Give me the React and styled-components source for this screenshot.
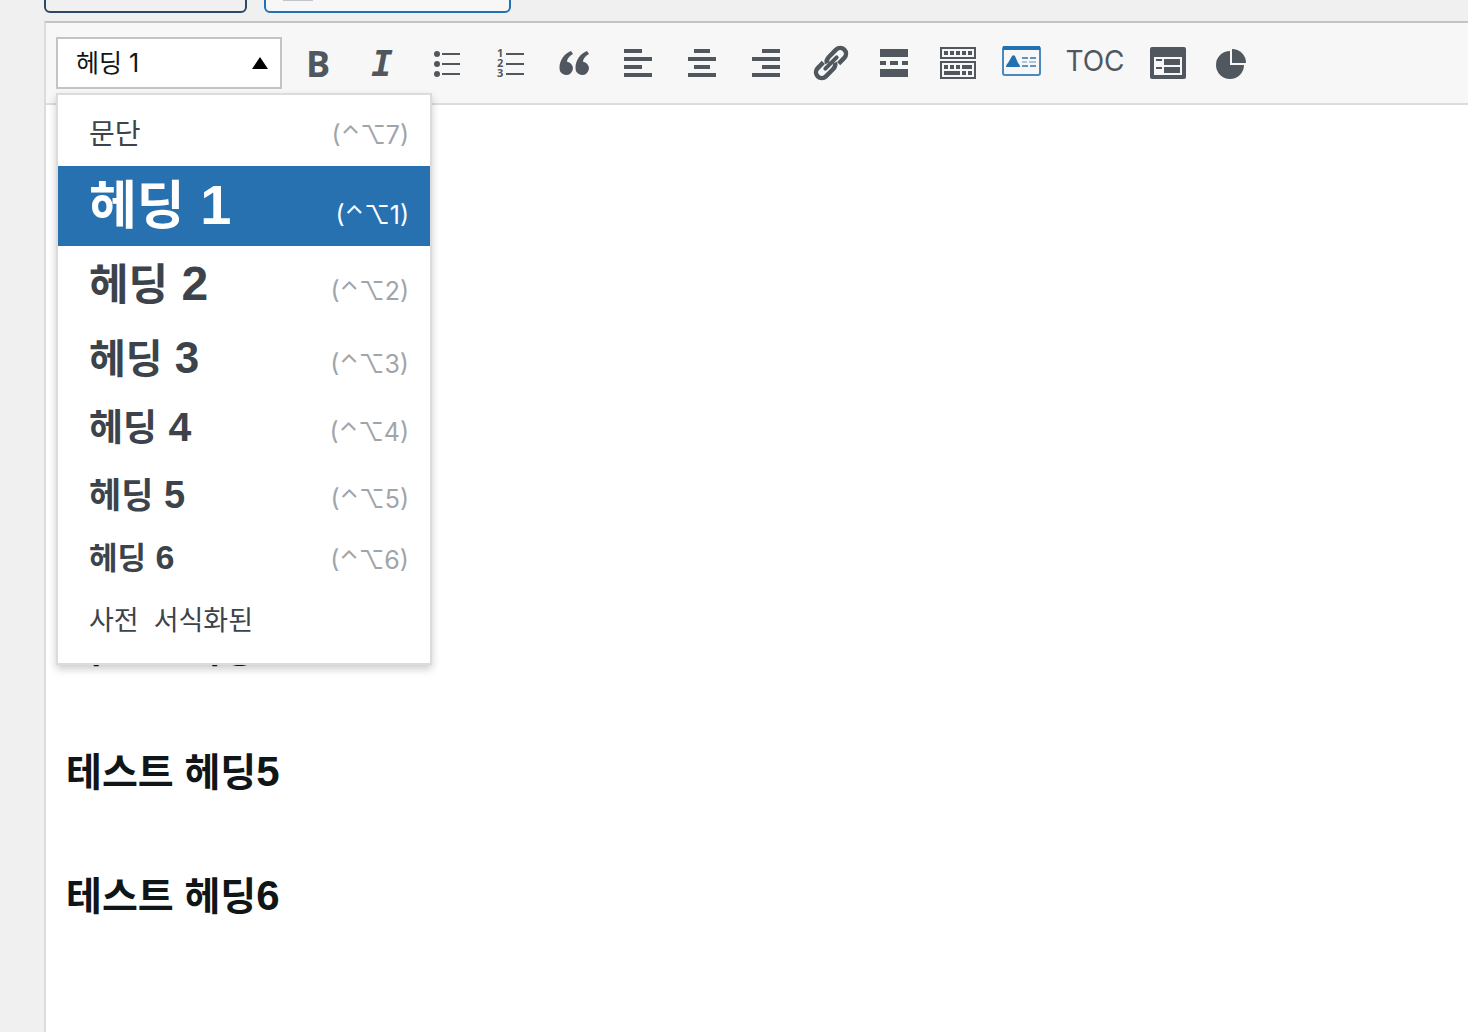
import React from 'react';
import styled, { createGlobalStyle } from 'styled-components';

const formats = [
    { name: '문단', size: 28, line: 62, keys: '(⌃⌥7)' },
    { name: '헤딩', level: 1, size: 52, numSize: 56, line: 80, keys: '(⌃⌥1)' },
    { name: '헤딩', level: 2, size: 43, numSize: 48, line: 78, keys: '(⌃⌥2)' },
    { name: '헤딩', level: 3, size: 40, numSize: 44, line: 70, keys: '(⌃⌥3)' },
    { name: '헤딩', level: 4, size: 37, numSize: 41, line: 69, keys: '(⌃⌥4)' },
    { name: '헤딩', level: 5, size: 35, numSize: 38, line: 65, keys: '(⌃⌥5)' },
    { name: '헤딩', level: 6, size: 31, numSize: 34, line: 62, keys: '(⌃⌥6)' },
    { name: '사전  서식화된', size: 27, line: 62 },
];

const BulletList = () => (
    <Icon viewBox="-1 0 40 40">
        {[11, 21, 31].map(y => (
            <g key={y}>
                <circle cx="10" cy={y} r="3"/>
                <rect x="15" y={y - 1} width="18" height="2"/>
            </g>
        ))}
    </Icon>
);

const NumberList = () => (
    <Icon viewBox="-1 0 40 40">
        {[1, 2, 3].map(n => (
            <g key={n}>
                <ListDigit x="6" y={n * 10 + 4}>{n}</ListDigit>
                <rect x="15" y={n * 10} width="18" height="2"/>
            </g>
        ))}
    </Icon>
);

const Quote = () => (
    <Icon viewBox="0 0 40 40">
        <path d="M17 8C10 11 5.500 17 5.500 25a6.700 6.700 0 1 0 7.500-6.300c0-3 2.500-5.700 6-7.700z"/>
        <path d="M33 8C26 11 21.500 17 21.500 25a6.700 6.700 0 1 0 7.500-6.300c0-3 2.500-5.700 6-7.700z"/>
    </Icon>
);

// short lines sit at the left, middle or right of the long ones
const Align = ({ x, width }) => (
    <Icon viewBox="0 0 40 40">
        <rect x={x} y="6" width={width} height="4"/>
        <rect x="6" y="14" width="28" height="4"/>
        <rect x={x} y="22" width={width} height="4"/>
        <rect x="6" y="30" width="28" height="4"/>
    </Icon>
);

const Link = () => (
    <Icon viewBox="0 0 40 40">
        <g transform="translate(21 20) rotate(-45)" fill="none" stroke="currentColor" strokeWidth="4.500">
            <path d="M-3 -2.500C-2 -5 0 -5.800 3 -5.800H13a5.800 5.800 0 0 1 0 11.600H5"/>
            <path d="M3 2.500C2 5 0 5.800 -3 5.800H-13a5.800 5.800 0 0 1 0 -11.600H-5"/>
            <path d="M-8 0H8" strokeWidth="4" strokeLinecap="round"/>
        </g>
    </Icon>
);

const More = () => (
    <Icon viewBox="0 0 40 40">
        <path d="M6 6h28v8H6zM6 18h6v4H6zM16 18h8v4h-8zM28 18h6v4h-6zM6 26h28v8H6z"/>
    </Icon>
);

const Keyboard = () => (
    <Icon viewBox="0 0 40 40">
        <path d="M3 5h34v10H3zM3 19h34v16H3z" fill="none" stroke="currentColor" strokeWidth="2"/>
        <path d="M6 8h4v4H6zM12 8h4v4h-4zM18 8h4v4h-4zM24 8h4v4h-4zM30 8h4v4h-4z"/>
        <path d="M6 22h4v4H6zM12 22h4v4h-4zM18 22h4v4h-4zM24 22h10v4H24zM6 28h16v4H6zM24 28h4v4h-4zM30 28h4v4h-4z"/>
    </Icon>
);

const Card = () => (
    <Icon viewBox="1 0 40 40">
        <rect x="2" y="4" width="37" height="28" rx="2" fill="#f7f7f7" stroke="#4a88bf" strokeWidth="2"/>
        <path d="M2 3h37v4H2z" fill="#2271b1"/>
        <path d="M5 24c0-2 1-3 2-4l4-7c1-1 2-1 3 0l3 7c1 1 2 2 2 4z" fill="#2271b1"/>
        <path d="M21 14h6v2h-6zM29 14h6v2h-6zM21 22h6v2h-6zM29 22h6v2h-6z" fill="#5b93c4"/>
        <path d="M21 18h5v2h-5zM28 18h7v2h-7z" fill="#b4c6d6"/>
    </Icon>
);

const Form = () => (
    <Icon viewBox="0 0 40 40">
        <rect x="2" y="4" width="36" height="32" rx="2"/>
        <rect x="6" y="14" width="28" height="18" fill="#f7f7f7"/>
        <path d="M8 16h6v2H8zM16 16h16v6H16zM8 24h6v2H8zM16 24h16v6H16z"/>
    </Icon>
);

const Pie = () => (
    <Icon viewBox="1 0 40 40">
        <path d="M19 8a14 14 0 1 0 14 14H19z"/>
        <path d="M21 6v14h14A14 14 0 0 0 21 6z"/>
    </Icon>
);

function App() {
    const [selected, setSelected] = React.useState(1);
    const [open, setOpen] = React.useState(true);

    const choose = (i) => {
        setSelected(i);
        setOpen(false);
    };

    const current = formats[selected];

    return (
        <Page>
            <GlobalStyle/>
            <MediaBar>
                <MediaButton $width={203} $color="#2c4a68" $background="#f0f0f1" aria-label="미디어 추가"/>
                <MediaButton $width={247} $color="#2271b1" $background="#f7f7f7" aria-label="양식 추가">
                    <MediaIcon/>
                </MediaButton>
            </MediaBar>
            <Editor>
                <Toolbar role="toolbar">
                    <FormatPicker>
                        <FormatButton aria-haspopup="listbox" aria-expanded={open} onClick={() => setOpen(!open)}>
                            <FormatValue>{current.name} {current.level}</FormatValue>
                            <Arrow viewBox="0 0 16 12"><path d="M8 0l8 12H0z"/></Arrow>
                        </FormatButton>
                        {open && (
                            <Menu role="listbox">
                                {formats.map((format, i) => (
                                    <MenuItem
                                        key={i}
                                        role="option"
                                        aria-selected={i === selected}
                                        $active={i === selected}
                                        onClick={() => choose(i)}
                                    >
                                        <FormatName $size={format.size} $line={format.line} $bold={!!format.level}>
                                            {format.name}
                                            {format.level && <Num $size={format.numSize}> {format.level}</Num>}
                                        </FormatName>
                                        {format.keys && <Keys $active={i === selected}>{format.keys}</Keys>}
                                    </MenuItem>
                                ))}
                            </Menu>
                        )}
                    </FormatPicker>
                    <Tools>
                        <Tool aria-label="굵게"><Bold>B</Bold></Tool>
                        <Tool aria-label="기울임꼴"><Italic>I</Italic></Tool>
                        <Tool aria-label="글머리 기호 목록"><BulletList/></Tool>
                        <Tool aria-label="번호 목록"><NumberList/></Tool>
                        <Tool aria-label="인용"><Quote/></Tool>
                        <Tool aria-label="왼쪽 정렬"><Align x="6" width="18"/></Tool>
                        <Tool aria-label="가운데 정렬"><Align x="12" width="16"/></Tool>
                        <Tool aria-label="오른쪽 정렬"><Align x="16" width="18"/></Tool>
                        <Tool aria-label="링크"><Link/></Tool>
                        <Tool aria-label="더보기 태그"><More/></Tool>
                        <Tool aria-label="툴바 토글"><Keyboard/></Tool>
                        <Tool aria-label="카드"><Card/></Tool>
                        <TextTool>TOC</TextTool>
                        <Tool aria-label="양식"><Form/></Tool>
                        <Tool aria-label="차트"><Pie/></Tool>
                    </Tools>
                </Toolbar>
                <Content>
                    {[4, 5, 6].map(n => (
                        <Heading key={n}>테스트 헤딩<Num $size={42}>{n}</Num></Heading>
                    ))}
                </Content>
            </Editor>
        </Page>
    );
}

export default App;

const GlobalStyle = createGlobalStyle`
  * {
    box-sizing: border-box;
  }

  body {
    margin: 0;
    background: #f0f0f0;
    font-family: "Liberation Sans", "Noto Sans CJK KR", sans-serif;
  }

  button {
    font-family: inherit;
    cursor: pointer;
  }
`;

const Page = styled.div`
  min-height: 100vh;
  display: flex;
  flex-direction: column;
  padding-left: 44px;
`;

const MediaBar = styled.div`
  display: flex;
  align-items: flex-end;
  gap: 17px;
  height: 21px;
  padding-bottom: 8px;
  overflow: hidden;
`;

const MediaButton = styled.button`
  display: flex;
  align-items: center;
  flex: none;
  width: ${p => p.$width}px;
  height: 60px;
  padding: 0 17px;
  border: 2px solid ${p => p.$color};
  border-radius: 6px;
  background: ${p => p.$background};
`;

const MediaIcon = styled.span`
  width: 30px;
  height: 36px;
  background: #c3c4c7;
`;

const Editor = styled.main`
  flex: 1;
  display: flex;
  flex-direction: column;
  border-top: 2px solid #c3c4c7;
  border-left: 2px solid #dcdcde;
  background: #fff;
`;

const Toolbar = styled.div`
  display: flex;
  align-items: center;
  gap: 4px;
  height: 82px;
  padding: 0 10px;
  border-bottom: 2px solid #dcdcde;
  background: #f7f7f7;
`;

const FormatPicker = styled.div`
  position: relative;
  flex: none;
`;

const FormatButton = styled.button`
  display: flex;
  align-items: center;
  justify-content: space-between;
  width: 226px;
  height: 52px;
  padding: 0 12px 0 18px;
  border: 2px solid #c3c4c7;
  background: #fff;
  color: #101517;
`;

const FormatValue = styled.span`
  padding-bottom: 5px;
  font-family: Inter, "Noto Sans CJK KR", sans-serif;
  font-size: 25px;
`;

const Arrow = styled.svg`
  width: 16px;
  height: 12px;
`;

const Menu = styled.div`
  position: absolute;
  z-index: 1;
  top: 56px;
  left: 0;
  width: 376px;
  padding: 9px 0 11px;
  border: 2px solid #dcdcde;
  background: #fff;
  box-shadow: 0 4px 8px rgba(0, 0, 0, 0.2);
`;

const MenuItem = styled.button`
  display: flex;
  align-items: baseline;
  justify-content: space-between;
  width: 100%;
  padding: 0 21px 0 31px;
  border: 0;
  background: ${p => p.$active ? '#2871b0' : 'transparent'};
  color: ${p => p.$active ? '#fff' : '#3c434a'};
`;

const FormatName = styled.span`
  font-size: ${p => p.$size}px;
  font-weight: ${p => p.$bold ? 700 : 400};
  line-height: ${p => p.$line}px;
  white-space: pre;
`;

const Num = styled.span`
  font-size: ${p => p.$size}px;
  line-height: 1;
`;

const Keys = styled.span`
  color: ${p => p.$active ? '#fff' : '#a0a5aa'};
  font-family: Inter, "DejaVu Sans", sans-serif;
  font-size: 25px;
  line-height: 30px;
`;

const Tools = styled.div`
  display: flex;
  align-items: center;
`;

const Tool = styled.button`
  display: flex;
  align-items: center;
  justify-content: center;
  width: 64px;
  height: 56px;
  padding: 0;
  border: 0;
  background: transparent;
  color: #50575e;
`;

const TextTool = styled(Tool)`
  width: 82px;
  padding-bottom: 4px;
  font-family: Inter, sans-serif;
  font-size: 28px;
`;

const Icon = styled.svg`
  width: 40px;
  height: 40px;
  fill: currentColor;
`;

const ListDigit = styled.text`
  font: 700 11px "Open Sans", sans-serif;
`;

const Bold = styled.span`
  padding-top: 2px;
  font: 700 36px/40px "Open Sans", sans-serif;
`;

const Italic = styled.span`
  padding-top: 2px;
  font: italic 700 36px/40px "DejaVu Sans Mono", monospace;
`;

const Content = styled.div`
  display: flex;
  flex-direction: column;
  gap: 64px;
  padding: 514px 20px 0;
  color: #101517;
`;

const Heading = styled.h4`
  margin: 0;
  font-size: 39px;
  font-weight: 700;
  line-height: 60px;
`;
